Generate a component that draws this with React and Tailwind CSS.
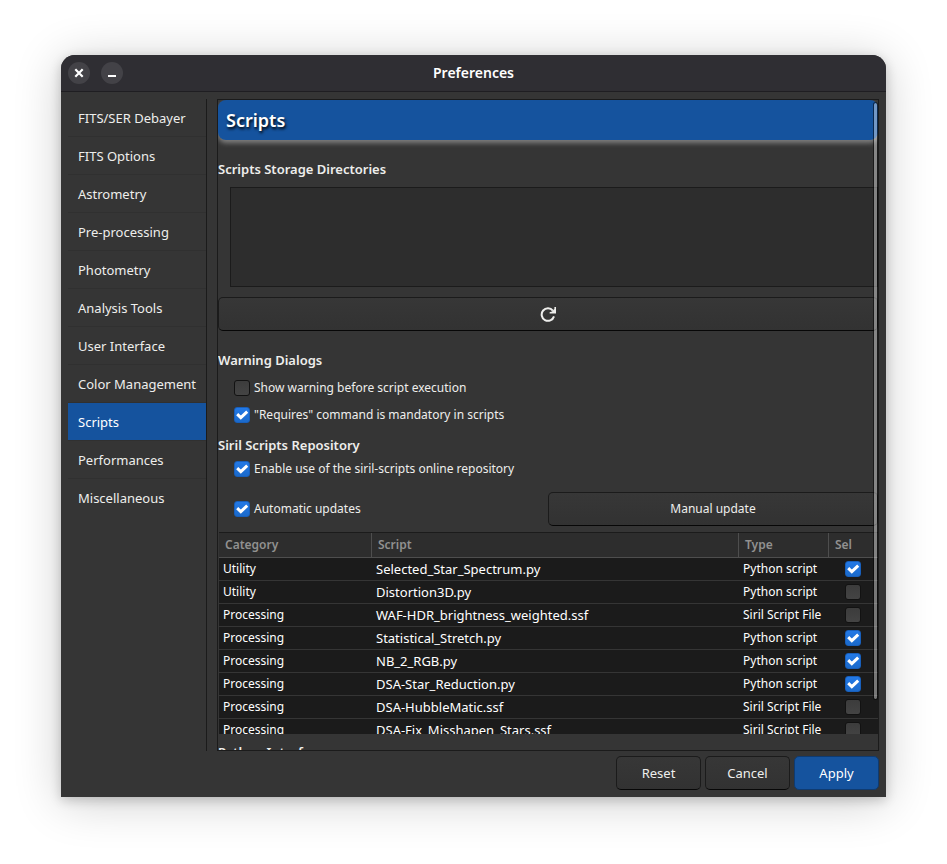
import { useState } from "react";
import clsx from "clsx";

const SECTIONS = [
  "FITS/SER Debayer",
  "FITS Options",
  "Astrometry",
  "Pre-processing",
  "Photometry",
  "Analysis Tools",
  "User Interface",
  "Color Management",
  "Scripts",
  "Performances",
  "Miscellaneous",
];

const SCRIPTS = [
  { category: "Utility", name: "Selected_Star_Spectrum.py", type: "Python script", selected: true },
  { category: "Utility", name: "Distortion3D.py", type: "Python script", selected: false },
  { category: "Processing", name: "WAF-HDR_brightness_weighted.ssf", type: "Siril Script File", selected: false },
  { category: "Processing", name: "Statistical_Stretch.py", type: "Python script", selected: true },
  { category: "Processing", name: "NB_2_RGB.py", type: "Python script", selected: true },
  { category: "Processing", name: "DSA-Star_Reduction.py", type: "Python script", selected: true },
  { category: "Processing", name: "DSA-HubbleMatic.ssf", type: "Siril Script File", selected: false },
  { category: "Processing", name: "DSA-Fix_Misshapen_Stars.ssf", type: "Siril Script File", selected: false },
];

const Checkbox = ({ defaultChecked, ...props }) => (
  <span className="grid h-4 w-4 shrink-0">
    <input
      type="checkbox"
      defaultChecked={defaultChecked}
      className="peer col-start-1 row-start-1 h-4 w-4 appearance-none rounded-[3px] border border-[#121212] bg-linear-to-b from-[#3c3c3c] to-[#444444] checked:border-[#185fbb] checked:from-[#2379e6] checked:to-[#1b6acb]"
      {...props}
    />
    <svg
      viewBox="0 0 16 16"
      className="pointer-events-none invisible col-start-1 row-start-1 h-4 w-4 peer-checked:visible"
      aria-hidden="true"
    >
      <path d="M3.2 7.2 L6.8 10.6 L13.2 4.6" fill="none" stroke="#fff" strokeWidth="3" />
    </svg>
  </span>
);

const CheckRow = ({ label, defaultChecked, className }) => (
  <label className={clsx("flex items-center gap-1 pl-4 text-[12px] leading-5", className)}>
    <Checkbox defaultChecked={defaultChecked} />
    {label}
  </label>
);

const Button = ({ children, primary, className, ...props }) => (
  <button
    type="button"
    className={clsx(
      "flex h-[34px] items-center justify-center rounded-[5px] border",
      primary
        ? "border-[#0f3b71] bg-[#15539e] text-white"
        : "border-[#1b1b1b] border-b-[#070707] bg-linear-to-b from-[#373737] to-[#323232]",
      className
    )}
    {...props}
  >
    {children}
  </button>
);

const TitleBar = () => (
  <header className="grid h-[37px] shrink-0 grid-cols-[1fr_auto_1fr] items-center border-b border-[#1f1e22] bg-[#2f2e33] px-[7px]">
    <div className="flex gap-[11px]">
      <button type="button" aria-label="Close" className="grid h-[22px] w-[22px] place-items-center rounded-full bg-[#434247]">
        <svg viewBox="0 0 10 10" className="h-[10px] w-[10px]">
          <path d="M1.3 1.3 L8.7 8.7 M8.7 1.3 L1.3 8.7" stroke="#fff" strokeWidth="2.2" />
        </svg>
      </button>
      <button type="button" aria-label="Minimize" className="grid h-[22px] w-[22px] place-items-center rounded-full bg-[#434247]">
        <svg viewBox="0 0 10 10" className="h-[10px] w-[10px]">
          <path d="M1 8 H9" stroke="#fff" strokeWidth="2" />
        </svg>
      </button>
    </div>
    <h1 className="text-sm font-semibold text-white">Preferences</h1>
  </header>
);

const Sidebar = ({ active, onSelect }) => (
  <nav className="w-[139px] shrink-0 border-r border-[#1b1b1b]">
    {SECTIONS.map((section) => (
      <button
        key={section}
        type="button"
        onClick={() => onSelect(section)}
        className={clsx(
          "block h-[38px] w-full border-b border-[#303030] pl-[10px] text-left whitespace-nowrap last:border-b-0",
          section === active && "bg-[#15539e] text-white"
        )}
      >
        {section}
      </button>
    ))}
  </nav>
);

const ScriptTable = () => (
  <div className="ml-px h-[202px] overflow-hidden border-t border-[#1b1b1b] bg-[#1b1b1b]">
    <table className="w-full table-fixed border-separate border-spacing-0 text-left text-white">
      <colgroup>
        <col className="w-[153px]" />
        <col />
        <col className="w-[90px]" />
        <col className="w-[49px]" />
      </colgroup>
      <thead>
        <tr className="h-[25px] bg-[#2d2d2d] text-[12px] leading-5 text-[#919190]">
          {["Category", "Script", "Type", "Sel"].map((title) => (
            <th
              key={title}
              className="border-r border-b border-[#4e4e4e] p-0 pl-[6px] font-semibold last:border-r-0"
            >
              {title}
            </th>
          ))}
        </tr>
      </thead>
      <tbody>
        {SCRIPTS.map((script) => (
          <tr key={script.name} className="h-[23px] whitespace-nowrap *:border-b *:border-[#353535] *:p-0 *:pl-1">
            <td className="text-[12px] leading-5">{script.category}</td>
            <td>{script.name}</td>
            <td className="text-[12px] leading-5">{script.type}</td>
            <td>
              <div className="pl-3">
                <Checkbox defaultChecked={script.selected} aria-label={script.name} />
              </div>
            </td>
          </tr>
        ))}
      </tbody>
    </table>
  </div>
);

const ScriptsPanel = () => (
  <main className="relative min-w-0 flex-1 overflow-hidden border border-[#1b1b1b]">
    <h2 className="flex h-10 items-center rounded-lg bg-[#15539e] pl-2 text-lg font-semibold text-white shadow-[0_3px_5px_#808080] [text-shadow:1px_2px_3px_#000000]">
      Scripts
    </h2>

    <h3 className="mt-[19px] font-semibold">Scripts Storage Directories</h3>
    <textarea
      aria-label="Scripts Storage Directories"
      className="mt-2 ml-3 block h-[100px] w-[calc(100%-12px)] resize-none border border-[#1b1b1b] bg-[#2d2d2d]"
    />
    <Button className="mt-[10px] w-full" aria-label="Reload scripts">
      <svg viewBox="0 0 16 16" className="h-4 w-4" aria-hidden="true">
        <path d="M12.9 4.6 A6.3 6.3 0 1 0 14 10.4" fill="none" stroke="currentColor" strokeWidth="2" />
        <path d="M16 1 V7.4 H9.6 V6.2 L12 5.6 L14.4 3 V1 Z" fill="currentColor" />
      </svg>
    </Button>

    <h3 className="mt-[19px] font-semibold">Warning Dialogs</h3>
    <CheckRow label="Show warning before script execution" className="mt-2" />
    <CheckRow label={'"Requires" command is mandatory in scripts'} defaultChecked className="mt-[7px]" />

    <h3 className="mt-[10px] font-semibold">Siril Scripts Repository</h3>
    <CheckRow
      label="Enable use of the siril-scripts online repository"
      defaultChecked
      className="mt-1"
    />
    <div className="mt-[13px] grid grid-cols-2 items-center">
      <CheckRow label="Automatic updates" defaultChecked />
      <Button className="text-[12px]">Manual update</Button>
    </div>
    <div className="mt-[6px]">
      <ScriptTable />
    </div>
    <h3 className="mt-2 font-semibold">Python Interface</h3>

    {/* overlay scrollbar thumb */}
    <div className="absolute top-[2px] right-0 h-[598px] w-[5px] rounded-full border border-black/50 bg-white/40 bg-clip-padding" />
  </main>
);

const App = () => {
  const [active, setActive] = useState("Scripts");

  return (
    <div className="flex h-screen flex-col bg-white px-[61px] pt-[55px] pb-[67px] font-['Noto_Sans',sans-serif] text-[13px] leading-5 text-[#eeeeec]">
      <div className="flex min-h-0 flex-1 flex-col overflow-hidden rounded-t-[14px] bg-[#353535] shadow-[0_3px_12px_rgba(0,0,0,0.2),0_5px_48px_rgba(0,0,0,0.2)]">
        <TitleBar />
        <div className="flex min-h-0 flex-1 gap-[10px] px-[7px] pt-[7px]">
          <Sidebar active={active} onSelect={setActive} />
          <ScriptsPanel />
        </div>
        <footer className="flex shrink-0 justify-end gap-1 px-[7px] pt-[5px] pb-[7px]">
          <Button className="w-[85px]">Reset</Button>
          <Button className="w-[85px]">Cancel</Button>
          <Button className="w-[85px]" primary>
            Apply
          </Button>
        </footer>
      </div>
    </div>
  );
};

export default App;
